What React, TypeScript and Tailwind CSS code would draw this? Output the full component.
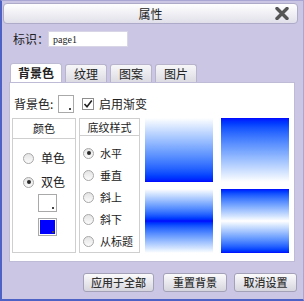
import React from 'react';

const cjk = { fontFamily: '"Noto Sans CJK SC", "Noto Sans", sans-serif' };

const Radio: React.FC<{ checked?: boolean }> = ({ checked }) => (
  <span className="w-[11px] h-[11px] rounded-full border border-[#a7a7a7] bg-linear-to-b from-[#e4e4e4] to-[#fbfbfb] flex items-center justify-center shrink-0">
    {checked && <span className="w-[4px] h-[4px] rounded-full bg-[#2a2a2a]" />}
  </span>
);

const ColorBox: React.FC<{ color: string; className?: string }> = ({ color, className }) => (
  <div className={`relative border border-[#a9a9a9] bg-white p-[1px] ${className ?? ''}`}>
    <div className="w-full h-full" style={{ backgroundColor: color }} />
    <span className="absolute right-[2px] bottom-[2px] w-[2px] h-[2px] bg-[#444]" />
  </div>
);

const App: React.FC = () => {
  const styles = [
    { label: '水平', checked: true },
    { label: '垂直' },
    { label: '斜上' },
    { label: '斜下' },
    { label: '从标题' },
  ];

  return (
    <div
      className="w-[304px] h-[301px] bg-[#cac6e4] border-t border-r border-[#a9a6d4] border-l-2 border-l-[#4e62c6] border-b-2 border-b-[#4e62c6] flex flex-col text-[#222]"
      style={cjk}
    >
      {/* Title bar */}
      <div className="relative mt-[2px] ml-[1px] mr-[5px] h-[21px] rounded-[4px] border border-[#aeabc9] bg-linear-to-b from-[#ffffff] to-[#e1e0ea] flex items-center justify-center">
        <span className="text-[12px] leading-none">属性</span>
        <svg
          className="absolute right-[8px] top-[3px]"
          width="14"
          height="13"
          viewBox="0 0 14 13"
        >
          <path d="M2 1.5 L12 11.5 M12 1.5 L2 11.5" stroke="#555" strokeWidth="3.4" strokeLinecap="round" />
        </svg>
      </div>

      {/* Identifier */}
      <div className="mt-[7px] ml-[11px] flex items-center h-[16px]">
        <span className="w-[35px] shrink-0 whitespace-nowrap text-[12px] leading-none">标识：</span>
        <div
          className="w-[80px] h-[16px] bg-white border border-[#d8d6e6] flex items-end pl-[4px] pb-[1px] text-[10px] leading-none"
          style={{ fontFamily: '"Liberation Serif", serif' }}
        >
          page1
        </div>
      </div>

      {/* Tabs */}
      <div className="mt-[16px] ml-[8px] flex gap-[3px] h-[19px] items-end">
        <div className="w-[52px] h-[19px] bg-white border border-b-0 border-[#bdbad3] rounded-t-[3px] flex items-center justify-center text-[12px] font-bold leading-none">
          背景色
        </div>
        {['纹理', '图案', '图片'].map((t) => (
          <div
            key={t}
            className="w-[42px] h-[18px] bg-linear-to-b from-[#f7f7f9] to-[#dcdbe3] border border-b-0 border-[#b7b4cc] rounded-t-[3px] flex items-center justify-center text-[12px] leading-none"
          >
            {t}
          </div>
        ))}
      </div>

      {/* Panel */}
      <div className="ml-[7px] w-[286px] h-[180px] bg-white border border-[#bebbd6] flex flex-col">
        <div className="mt-[12px] ml-[4px] flex items-center h-[18px]">
          <span className="text-[12px] leading-none w-[44px]">背景色:</span>
          <ColorBox color="#ffffff" className="w-[16px] h-[18px]" />
          <span className="ml-[8px] w-[12px] h-[12px] border border-[#8e8e8e] bg-white flex items-center justify-center">
            <svg width="10" height="10" viewBox="0 0 10 10">
              <path d="M1.5 5 L4 7.8 L8.8 1.5" stroke="#222" strokeWidth="1.6" fill="none" />
            </svg>
          </span>
          <span className="ml-[5px] text-[12px] leading-none">启用渐变</span>
        </div>

        <div className="mt-[5px] ml-[2px] flex">
          {/* Colour group */}
          <div className="w-[64px] h-[135px] border border-[#cfcfcf] flex flex-col">
            <div className="h-[20px] border-b border-[#cfcfcf] flex items-center justify-center text-[11px] leading-none">
              颜色
            </div>
            <div className="pt-[7px] flex flex-col">
              <div className="h-[24px] flex items-center pl-[10px] gap-[7px] text-[12px] leading-none">
                <Radio />
                <span>单色</span>
              </div>
              <div className="h-[24px] flex items-center pl-[10px] gap-[7px] text-[12px] leading-none">
                <Radio checked />
                <span>双色</span>
              </div>
              <ColorBox color="#ffffff" className="ml-[25px] w-[19px] h-[18px]" />
              <ColorBox color="#0000ff" className="ml-[25px] mt-[6px] w-[19px] h-[18px]" />
            </div>
          </div>

          {/* Pattern group */}
          <div className="ml-[3px] w-[61px] h-[135px] border border-[#cfcfcf] flex flex-col">
            <div className="h-[20px] border-b border-[#cfcfcf] flex items-center justify-center text-[11px] leading-none">
              底纹样式
            </div>
            <div className="pt-[6px] flex flex-col">
              {styles.map((s) => (
                <div key={s.label} className="h-[22px] flex items-center pl-[3px] gap-[6px] text-[11px] leading-none">
                  <Radio checked={s.checked} />
                  <span>{s.label}</span>
                </div>
              ))}
            </div>
          </div>

          {/* Previews */}
          <div className="ml-[5px] grid grid-cols-2 gap-x-[8px] gap-y-[7px] content-start">
            <div className="w-[68px] h-[64px] bg-linear-to-b from-white to-[#0000ff]" />
            <div className="w-[68px] h-[64px] bg-linear-to-b from-[#0000ff] to-white" />
            <div className="w-[68px] h-[64px] bg-linear-to-b from-white via-[#0000ff] to-white" />
            <div className="w-[68px] h-[64px] bg-linear-to-b from-[#0000ff] via-white to-[#0000ff]" />
          </div>
        </div>
      </div>

      {/* Buttons */}
      <div className="mt-[11px] flex justify-end mr-[6px] h-[19px]">
        {[
          { t: '应用于全部', w: 'w-[71px]', m: '' },
          { t: '重置背景', w: 'w-[64px]', m: 'ml-[9px]' },
          { t: '取消设置', w: 'w-[63px]', m: 'ml-[7px]' },
        ].map((b) => (
          <div
            key={b.t}
            className={`${b.w} ${b.m} h-[19px] rounded-[3px] border border-[#a3a1b8] bg-linear-to-b from-[#fbfbfc] to-[#d6d5de] flex items-center justify-center text-[11px] font-medium leading-none text-[#333]`}
          >
            {b.t}
          </div>
        ))}
      </div>
    </div>
  );
};

export default App;
